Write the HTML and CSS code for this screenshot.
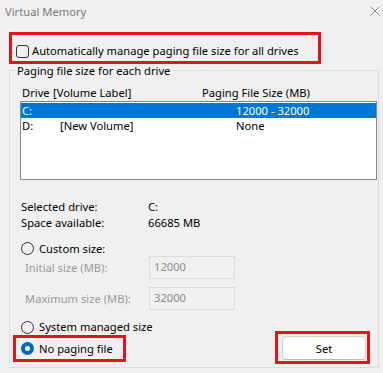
FILE: index.html
```html
<!DOCTYPE html>
<html lang="en">
<head>
    <meta charset="UTF-8">
    <meta name="viewport" content="width=device-width, initial-scale=1.0">
    <title>Virtual Memory</title>
    <link rel="stylesheet" href="styles.css">
</head>
<body>
    <div class="window">
        <div class="titlebar">
            <span class="title">Virtual Memory</span>
            <svg class="close" width="10" height="10" viewBox="0 0 10 10">
                <path d="M0.5 0.5 L9.5 9.5 M9.5 0.5 L0.5 9.5" stroke="#8a8a8a" stroke-width="1" fill="none"/>
            </svg>
        </div>

        <div class="mark mark-auto">
            <label class="check-row"><span class="checkbox"></span>Automatically manage paging file size for all drives</label>
        </div>

        <fieldset class="group">
            <legend>Paging file size for each drive</legend>

            <div class="list-head">
                <span>Drive</span>
                <span>[Volume Label]</span>
                <span>Paging File Size (MB)</span>
            </div>
            <div class="listbox">
                <div class="list-row selected">
                    <span>C:</span>
                    <span></span>
                    <span>12000 - 32000</span>
                </div>
                <div class="list-row">
                    <span>D:</span>
                    <span>[New Volume]</span>
                    <span>None</span>
                </div>
            </div>

            <div class="info">
                <div class="info-row"><span class="info-key">Selected drive:</span><span>C:</span></div>
                <div class="info-row"><span class="info-key">Space available:</span><span>66685 MB</span></div>
            </div>

            <label class="radio-row custom"><span class="radio"></span>Custom size:</label>
            <div class="size-row">
                <span class="size-label">Initial size (MB):</span>
                <span class="size-input">12000</span>
            </div>
            <div class="size-row second">
                <span class="size-label">Maximum size (MB):</span>
                <span class="size-input">32000</span>
            </div>

            <div class="bottom">
                <div class="bottom-left">
                    <label class="radio-row system"><span class="radio"></span>System managed size</label>
                    <div class="mark mark-none">
                        <label class="radio-row"><span class="radio checked"></span>No paging file</label>
                    </div>
                </div>
                <div class="mark mark-set">
                    <button class="btn">Set</button>
                </div>
            </div>
        </fieldset>
    </div>
</body>
</html>
```

FILE: styles.css
```css
body {
    margin: 0;
    background: #f0f0f0;
    font-family: "Noto Sans", sans-serif;
    font-size: 11.2px;
    color: #000;
}
.window {
    width: 383px;
    height: 373px;
    overflow: hidden;
}
.titlebar {
    height: 24px;
    box-sizing: border-box;
    display: flex;
    align-items: center;
    justify-content: space-between;
    padding: 0 3px 2px 5px;
}
.title {
    font-size: 11.2px;
    color: #7a7a7a;
}
.mark {
    border: 3px solid #e3121b;
    box-sizing: border-box;
}
.mark-auto {
    width: 312px;
    height: 32px;
    margin: 8px 0 0 9px;
    padding: 6px 0 0 4px;
}
.check-row {
    display: flex;
    align-items: center;
    gap: 3px;
    line-height: 20px;
}
.checkbox {
    width: 13px;
    height: 13px;
    box-sizing: border-box;
    border: 1px solid #333;
    border-radius: 3px;
}
.group {
    width: 370px;
    box-sizing: border-box;
    margin: -1px 4px 0 9px;
    padding: 0 0 5px 0;
    border: 1px solid #dcdcdc;
    min-width: 0;
}
.group legend {
    margin-left: 5px;
    padding: 2px 2px 0;
    line-height: 12px;
}
.list-head {
    display: grid;
    grid-template-columns: 31px 149px auto;
    line-height: 16px;
    margin-top: 8px;
    padding-left: 12px;
}
.listbox {
    height: 79px;
    box-sizing: border-box;
    margin: 0 1px 0 10px;
    padding: 1px 0 0 0;
    background: #fff;
    border: 1px solid #828790;
}
.list-row {
    display: grid;
    grid-template-columns: 38px 176px auto;
    height: 15px;
    line-height: 15px;
    padding-left: 1px;
}
.list-row.selected {
    background: #0078d7;
    color: #fff;
}
.info {
    margin-top: 19px;
    padding-left: 11px;
}
.info-row {
    display: flex;
    line-height: 16px;
}
.info-key {
    width: 127px;
}
.radio-row {
    display: flex;
    align-items: center;
    gap: 5px;
    line-height: 16px;
}
.radio {
    width: 13px;
    height: 13px;
    box-sizing: border-box;
    border: 1px solid #333;
    border-radius: 50%;
}
.radio.checked {
    border: 4px solid #0067c0;
    background: #fff;
}
.custom {
    margin-top: 10px;
    padding-left: 11px;
    line-height: 15px;
}
.size-row {
    display: flex;
    align-items: center;
    padding-left: 15px;
    color: #9a9a9a;
}
.size-row.second {
    margin-top: 8px;
}
.size-label {
    width: 124px;
}
.size-input {
    width: 86px;
    height: 23px;
    box-sizing: border-box;
    padding-left: 4px;
    line-height: 20px;
    border: 1px solid #dcdcdc;
    color: #8c8c8c;
}
.bottom {
    display: flex;
    justify-content: space-between;
    align-items: flex-end;
    margin-top: 9px;
}
.system {
    padding-left: 11px;
}
.mark-none {
    width: 113px;
    height: 27px;
    margin-left: 3px;
    padding-left: 5px;
    display: flex;
    align-items: center;
}
.mark-set {
    width: 95px;
    height: 33px;
    margin: 0 8px -2px 0;
    padding: 2px 1px 1px 4px;
}
.btn {
    width: 84px;
    height: 24px;
    background: #fdfdfd;
    border: 1px solid #d0d0d0;
    border-bottom-color: #b8b8b8;
    border-radius: 4px;
    font-family: "Noto Sans", sans-serif;
    font-size: 11.2px;
    color: #000;
    padding: 0;
}
```
